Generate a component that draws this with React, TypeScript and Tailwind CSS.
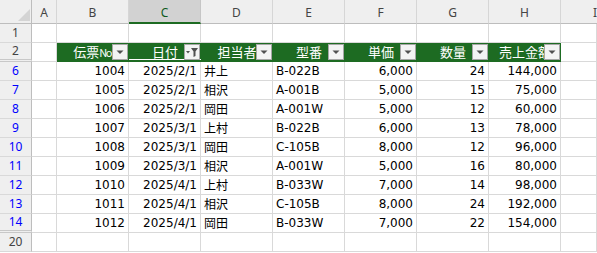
import React from "react";

const cols = ["A", "B", "C", "D", "E", "F", "G", "H"];

const heads = ["伝票No", "日付", "担当者", "型番", "単価", "数量", "売上金額"];

const rows: [number, string, string, string, string, string, string, string][] = [
  [6, "1004", "2025/2/1", "井上", "B-022B", "6,000", "24", "144,000"],
  [7, "1005", "2025/2/1", "相沢", "A-001B", "5,000", "15", "75,000"],
  [8, "1006", "2025/2/1", "岡田", "A-001W", "5,000", "12", "60,000"],
  [9, "1007", "2025/3/1", "上村", "B-022B", "6,000", "13", "78,000"],
  [10, "1008", "2025/3/1", "岡田", "C-105B", "8,000", "12", "96,000"],
  [11, "1009", "2025/3/1", "相沢", "A-001W", "5,000", "16", "80,000"],
  [12, "1010", "2025/4/1", "上村", "B-033W", "7,000", "14", "98,000"],
  [13, "1011", "2025/4/1", "相沢", "C-105B", "8,000", "24", "192,000"],
  [14, "1012", "2025/4/1", "岡田", "B-033W", "7,000", "22", "154,000"],
];

const grid = "border-r border-b border-[#d9d9d9]";
const dataFont = { fontFamily: '"DejaVu Sans", "Noto Sans CJK JP", sans-serif' };
const jpFont = { fontFamily: '"Noto Sans CJK JP", sans-serif' };

function FilterButton({ active }: { active?: boolean }) {
  return (
    <div className="absolute right-px top-[1px] w-4 h-4 border border-[#a6a6a6] bg-[#f3f3f3] flex items-center justify-center">
      {active ? (
        <svg width="14" height="14" viewBox="0 0 14 14">
          <path d="M1 6 L5 6 L3 8.5 Z" fill="#505050" />
          <path d="M6 3 L13 3 L10.5 6.5 L10.5 11 L8.5 12 L8.5 6.5 Z" fill="#505050" />
        </svg>
      ) : (
        <svg width="14" height="14" viewBox="0 0 14 14">
          <path d="M3.5 5.5 L10.5 5.5 L7 9 Z" fill="#505050" />
        </svg>
      )}
    </div>
  );
}

function RowHead({ n, blue, double }: { n: number; blue?: boolean; double?: boolean }) {
  return (
    <div
      className={`w-[32px] shrink-0 bg-[#efefef] border-r border-[#bdbdbd] flex items-center justify-center text-[12px] ${
        double ? "border-b-[3px] border-b-[#c8c8c8] border-double" : "border-b border-b-[#d9d9d9]"
      } ${blue ? "text-[#0000ff]" : "text-[#444]"}`}
      style={{ fontFamily: '"Noto Sans", sans-serif' }}
    >
      {n}
    </div>
  );
}

export default function App() {
  return (
    <div className="w-[597px] h-[253px] overflow-hidden bg-white">
      {/* column letters */}
      <div className="flex h-[24px]">
        <div className="w-[32px] shrink-0 bg-[#efefef] border-r border-b border-[#bdbdbd] relative">
          <svg className="absolute right-[1px] bottom-[2px]" width="12" height="12" viewBox="0 0 12 12">
            <path d="M12 0 L12 12 L0 12 Z" fill="#d4d4d4" />
          </svg>
        </div>
        {cols.map((c) => (
          <div
            key={c}
            className={`${c === "A" ? "w-[25px]" : "w-[72px]"} shrink-0 flex items-center justify-center pt-[3px] text-[12px] border-r ${
              c === "C"
                ? "bg-[#d2d2d2] text-[#0f5a1c] border-b-2 border-b-[#1d6b22] border-r-[#c6c6c6]"
                : "bg-[#efefef] text-[#444] border-b border-b-[#bdbdbd] border-r-[#d6d6d6]"
            }`}
            style={{ fontFamily: '"Noto Sans", sans-serif' }}
          >
            {c}
          </div>
        ))}
        <div
          className="flex-1 bg-[#efefef] border-b border-[#bdbdbd] flex items-center pl-[32px] pt-[3px] text-[12px] text-[#444] whitespace-nowrap"
          style={{ fontFamily: '"Noto Sans", sans-serif' }}
        >
          I
        </div>
      </div>

      {/* row 1 */}
      <div className="flex h-[19px]">
        <RowHead n={1} />
        <div className={`w-[25px] shrink-0 ${grid}`} />
        {cols.slice(1).map((c) => (
          <div key={c} className={`w-[72px] shrink-0 ${grid}`} />
        ))}
        <div className={`flex-1 ${grid}`} />
      </div>

      {/* row 2: table header */}
      <div className="flex h-[19px]">
        <RowHead n={2} double />
        <div className={`w-[25px] shrink-0 ${grid}`} />
        {heads.map((h, i) => (
          <div
            key={h}
            className={`w-[72px] shrink-0 relative bg-[#1d6b22] text-white text-[13px] leading-[18px] text-center overflow-hidden whitespace-nowrap ${
              i === 1 ? "border-b-[2px] border-b-[#1d6b22] shadow-[inset_0_-1px_0_#ffffff]" : "border-b border-[#1d6b22]"
            }`}
            style={jpFont}
          >
            {i === 0 ? (
              <span className="pr-[2px]">
                伝票<span className="text-[11px] tracking-[-1.5px]">No</span>
              </span>
            ) : (
              h
            )}
            <FilterButton active={i === 1} />
          </div>
        ))}
        <div className={`flex-1 ${grid}`} />
      </div>

      {/* data */}
      {rows.map(([n, ...cells]) => (
        <div key={n} className="flex h-[19px]">
          <RowHead n={n} blue double={n === 14} />
          <div className={`w-[25px] shrink-0 ${grid}`} />
          {cells.map((v, i) => (
            <div
              key={i}
              className={`w-[72px] shrink-0 ${grid} text-[12px] leading-[18px] text-black whitespace-nowrap ${
                i === 2 || i === 3 ? "text-left pl-[3px]" : "text-right pr-[3px]"
              }`}
              style={i === 2 ? jpFont : dataFont}
            >
              {v}
            </div>
          ))}
          <div className={`flex-1 ${grid}`} />
        </div>
      ))}

      {/* row 20 */}
      <div className="flex h-[19px]">
        <RowHead n={20} />
        <div className={`w-[25px] shrink-0 ${grid}`} />
        {cols.slice(1).map((c) => (
          <div key={c} className={`w-[72px] shrink-0 ${grid}`} />
        ))}
        <div className={`flex-1 ${grid}`} />
      </div>
    </div>
  );
}
